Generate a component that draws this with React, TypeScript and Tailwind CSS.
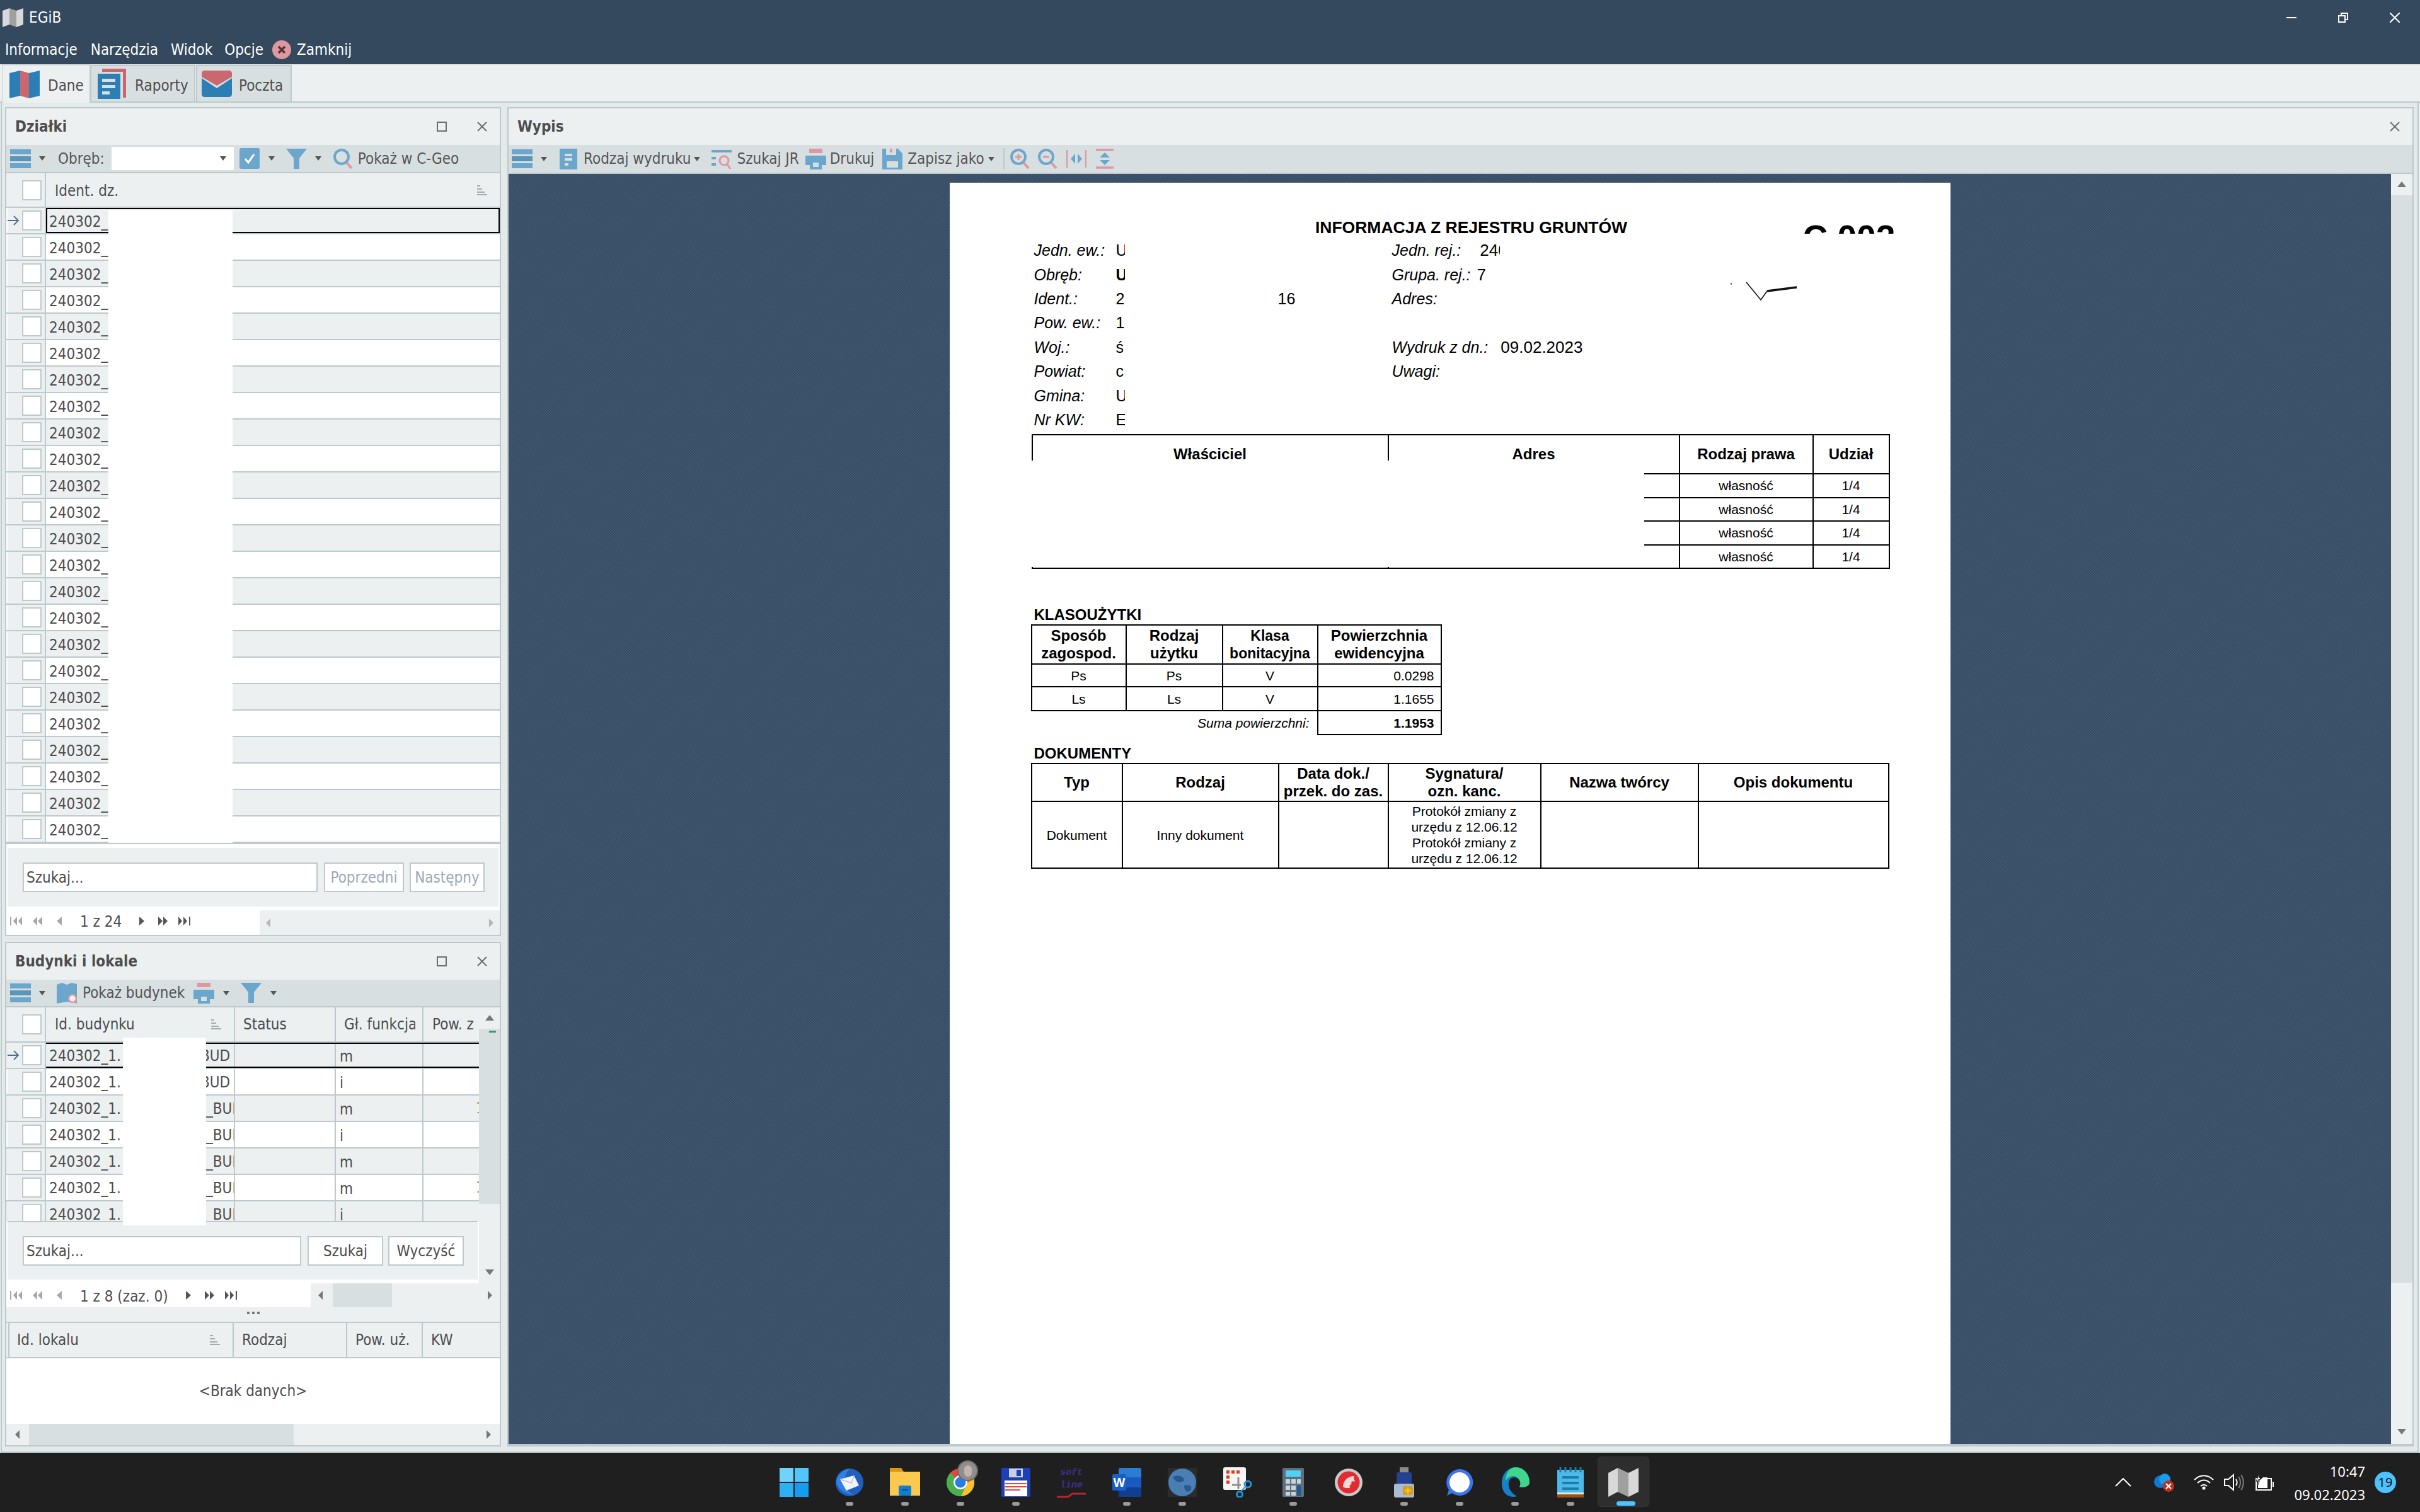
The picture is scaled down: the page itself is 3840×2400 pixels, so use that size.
import React from "react";

const BLUE = "#6ba6cd";
const RED = "#dd98a0";

function Caret({ className = "" }: { className?: string }) {
  return <span className={`inline-block w-0 h-0 border-x-[5px] border-x-transparent border-t-[7px] border-t-[#555555] ${className}`} />;
}

function Hamburger() {
  return (
    <svg width="33" height="30" viewBox="0 0 33 30">
      <rect width="33" height="8" fill={BLUE} />
      <rect y="11" width="33" height="8" fill="#5b96b8" />
      <rect y="22" width="33" height="8" fill={BLUE} />
    </svg>
  );
}

function Funnel() {
  return (
    <svg width="33" height="32" viewBox="0 0 33 32">
      <path d="M0 0H33L21 15V32H12V15Z" fill={BLUE} />
    </svg>
  );
}

function Magnifier({ plus, minus }: { plus?: boolean; minus?: boolean }) {
  return (
    <svg width="32" height="32" viewBox="0 0 32 32">
      <ellipse cx="14" cy="13" rx="11" ry="11" fill="none" stroke={BLUE} strokeWidth="4" />
      <path d="M22 22L30 31" stroke={RED} strokeWidth="4" />
      {plus && <path d="M14 8V18M9 13H19" stroke={RED} strokeWidth="3" />}
      {minus && <path d="M9 13H19" stroke={RED} strokeWidth="3" />}
    </svg>
  );
}

function Printer() {
  return (
    <svg width="33" height="33" viewBox="0 0 33 33">
      <rect x="6" width="21" height="7" fill={RED} />
      <path d="M0 11H33V26H26V18H7V26H0Z" fill={BLUE} />
      <path d="M7 18H26V33H7ZM12 22V29H21V22Z" fill={BLUE} fillRule="evenodd" />
    </svg>
  );
}

function SortMark() {
  return (
    <svg width="16" height="16" viewBox="0 0 16 16">
      <path d="M0 1H5M0 6H8M0 11H12M0 15H16" stroke="#8a9599" strokeWidth="1.6" />
    </svg>
  );
}

function CheckBox({ h = 32 }: { h?: number }) {
  return <span style={{ height: h }} className="block w-[31px] bg-white border-2 border-[#bdc9cc]" />;
}

function RowArrow() {
  return (
    <svg width="19" height="16" viewBox="0 0 19 16" className="absolute left-[2px]">
      <path d="M0 8H17M10 1L17 8L10 15" fill="none" stroke="#4f6b8a" strokeWidth="1.8" />
    </svg>
  );
}

function Tri({ dir, c = "#777777" }: { dir: "l" | "r" | "u" | "d"; c?: string }) {
  const p = { l: "M9 0V14L2 7Z", r: "M1 0V14L8 7Z", u: "M8 2L15 11H1Z", d: "M1 2H15L8 11Z" }[dir];
  return (
    <svg width={dir === "u" || dir === "d" ? 16 : 10} height="14" viewBox={dir === "u" || dir === "d" ? "0 0 16 14" : "0 0 10 14"}>
      <path d={p} fill={c} />
    </svg>
  );
}

function Pager({ text, gap }: { text: string; gap: number }) {
  const dim = "#a8a8a8";
  const dark = "#555555";
  return (
    <div className="flex items-center h-full">
      <svg width="20" height="14" viewBox="0 0 20 14" className="ml-[6px]">
        <path d="M0 0H2V14H0ZM11 0V14L5 7ZM19 0V14L13 7Z" fill={dim} />
      </svg>
      <svg width="15" height="14" viewBox="0 0 15 14" className="ml-[16px]">
        <path d="M7 0V14L0 7ZM15 0V14L8 7Z" fill={dim} />
      </svg>
      <svg width="8" height="14" viewBox="0 0 8 14" className="ml-[23px]">
        <path d="M8 0V14L0 7Z" fill={dim} />
      </svg>
      <span className="ml-[29px] pt-[3px] whitespace-nowrap text-[#4d4d4d]">{text}</span>
      <svg width="8" height="14" viewBox="0 0 8 14" style={{ marginLeft: gap }}>
        <path d="M0 0V14L8 7Z" fill={dark} />
      </svg>
      <svg width="15" height="14" viewBox="0 0 15 14" className="ml-[22px]">
        <path d="M0 0V14L7 7ZM8 0V14L15 7Z" fill={dark} />
      </svg>
      <svg width="20" height="14" viewBox="0 0 20 14" className="ml-[17px]">
        <path d="M0 0V14L6 7ZM8 0V14L14 7ZM17 0H19V14H17Z" fill={dark} />
      </svg>
    </div>
  );
}

function PanelHeader({ title }: { title: string }) {
  return (
    <div className="h-[58px] shrink-0 flex items-center justify-between pl-[14px] pr-[20px] bg-[#ecf0f1]">
      <span className="font-bold text-[#4d4d4d] text-[24px]">{title}</span>
      <div className="flex items-center gap-[48px]">
        <span className="block w-[16px] h-[16px] border-2 border-[#6e6e6e]" />
        <svg width="16" height="16" viewBox="0 0 16 16">
          <path d="M1 1L15 15M15 1L1 15" stroke="#6e6e6e" strokeWidth="2" />
        </svg>
      </div>
    </div>
  );
}

function Band({ className = "", children }: { className?: string; children: React.ReactNode }) {
  return <div className={`flex items-center bg-[#ecf0f1] ${className}`}>{children}</div>;
}

function SmallBtn({ w, disabled, children }: { w: number; disabled?: boolean; children: React.ReactNode }) {
  return (
    <span
      style={{ width: w }}
      className={`h-[47px] flex items-center justify-center bg-white border-2 border-[#bdc9cc] ${disabled ? "text-[#9aa8ba]" : "text-[#4d4d4d]"}`}
    >
      {children}
    </span>
  );
}

function DzialkiPanel() {
  const rows = Array.from({ length: 24 }, (_, i) => i);
  return (
    <section className="h-[1316px] shrink-0 flex flex-col border-2 border-[#bdc9cc] bg-white">
      <PanelHeader title="Działki" />
      <div className="h-[45px] shrink-0 flex items-center bg-[#d8dfe1] border-b-2 border-[#bdc9cc] text-[#555555]">
        <span className="ml-[6px]"><Hamburger /></span>
        <Caret className="ml-[13px]" />
        <span className="ml-[20px]">Obręb:</span>
        <span className="ml-[9px] w-[198px] h-[41px] bg-white border-2 border-[#d8dfe1] flex items-center justify-end pr-[12px]"><Caret /></span>
        <svg width="32" height="33" viewBox="0 0 32 33" className="ml-[7px]">
          <rect width="32" height="33" rx="3" fill={BLUE} />
          <path d="M9 17L14 23L23 10" fill="none" stroke="#fff" strokeWidth="3" />
        </svg>
        <Caret className="ml-[14px]" />
        <span className="ml-[18px]"><Funnel /></span>
        <Caret className="ml-[13px]" />
        <span className="ml-[18px]"><Magnifier /></span>
        <span className="ml-[8px] whitespace-nowrap">Pokaż w C-Geo</span>
      </div>
      <div className="relative h-[1063px] shrink-0 overflow-hidden bg-white">
        <div className="h-[55px] flex bg-[#ecf0f1] border-b-2 border-[#bdc9cc] text-[#4d4d4d]">
          <div className="ml-[2px] w-[61px] shrink-0 flex items-center pl-[23px] border-r-2 border-[#bdc9cc]"><CheckBox /></div>
          <div className="flex-1 flex items-center justify-between pl-[14px] pr-[20px]"><span className="pt-[3px]">Ident. dz.</span><SortMark /></div>
        </div>
        {rows.map((i) => (
          <div key={i} className="relative h-[42px] flex border-b-2 border-[#bdc9cc] text-[#4d4d4d]">
            <div className="ml-[2px] w-[61px] shrink-0 flex items-center pl-[23px] bg-[#ecf0f1] border-r-2 border-[#bdc9cc]">
              {i === 0 && <RowArrow />}
              <CheckBox />
            </div>
            <div className={`flex-1 flex items-center pl-[5px] ${i % 2 === 0 ? "bg-[#ecf0f1]" : "bg-white"} ${i === 0 ? "border-2 border-black" : ""}`}>
              <span className={`pt-[3px] ${i === 0 ? "-ml-[2px]" : ""}`}>240302_</span>
            </div>
          </div>
        ))}
        <div className="absolute left-[162px] top-[59px] w-[197px] h-[1008px] bg-white" />
      </div>
      <div className="h-[8px] shrink-0 bg-white border-t-2 border-[#bdc9cc]" />
      <Band className="h-[93px] shrink-0 mx-[2px] pl-[24px]">
        <span className="w-[468px] h-[47px] flex items-center pl-[4px] bg-white border-2 border-[#bdc9cc] text-[#4d4d4d]">Szukaj...</span>
        <span className="ml-[10px]"><SmallBtn w={127} disabled>Poprzedni</SmallBtn></span>
        <span className="ml-[9px]"><SmallBtn w={119} disabled>Następny</SmallBtn></span>
      </Band>
      <div className="flex-1 flex items-stretch">
        <div className="w-[402px] shrink-0"><Pager text="1 z 24" gap={28} /></div>
        <div className="flex-1 mt-[6px] bg-[#ecf0f1] flex items-center justify-between px-[8px]">
          <Tri dir="l" c="#b5b5b5" /><Tri dir="r" c="#b5b5b5" />
        </div>
      </div>
    </section>
  );
}

function BudCell({ w, children, last }: { w: number; children?: React.ReactNode; last?: boolean }) {
  return (
    <div style={{ width: w }} className={`shrink-0 h-full flex items-center overflow-hidden ${last ? "" : "border-r-2 border-[#bdc9cc]"}`}>
      {children}
    </div>
  );
}

function BudynkiPanel() {
  const data = [
    { f: "m", s: "BUD", n: false, head: "w-[240px]" },
    { f: "i", s: "BUD", n: false, head: "w-[240px]" },
    { f: "m", s: "_BUD", n: true, head: "w-[249px]" },
    { f: "i", s: "_BUD", n: false, head: "w-[249px]" },
    { f: "m", s: "_BUD", n: false, head: "w-[249px]" },
    { f: "m", s: "_BUD", n: true, head: "w-[249px]" },
    { f: "i", s: "_BUD", n: false, head: "w-[249px]" },
  ];
  return (
    <section className="flex-1 flex flex-col border-2 border-[#bdc9cc] bg-white">
      <PanelHeader title="Budynki i lokale" />
      <div className="h-[44px] shrink-0 flex items-center bg-[#d8dfe1] border-b-2 border-[#bdc9cc] text-[#555555]">
        <span className="ml-[6px]"><Hamburger /></span>
        <Caret className="ml-[13px]" />
        <svg width="33" height="33" viewBox="0 0 33 33" className="ml-[18px]">
          <path d="M0 3L8 0L16 3L24 0L32 2V32L16 30L0 33Z" fill={BLUE} />
          <circle cx="25" cy="25" r="6" fill="#eef2f3" stroke={RED} strokeWidth="2.5" />
          <path d="M29 29L32 33" stroke={RED} strokeWidth="2.5" />
        </svg>
        <span className="ml-[8px] whitespace-nowrap">Pokaż budynek</span>
        <span className="ml-[14px]"><Printer /></span>
        <Caret className="ml-[14px]" />
        <span className="ml-[18px]"><Funnel /></span>
        <Caret className="ml-[14px]" />
      </div>
      <div className="h-[438px] shrink-0 flex">
        <div className="w-[750px] shrink-0 relative flex flex-col bg-white">
          <div className="h-[339px] shrink-0 overflow-hidden">
            <div className="h-[56px] flex bg-[#ecf0f1] border-b-2 border-[#bdc9cc] text-[#4d4d4d]">
              <div className="ml-[2px] w-[61px] shrink-0 flex items-center pl-[23px] border-r-2 border-[#bdc9cc]"><CheckBox /></div>
              <BudCell w={300}><span className="pl-[14px] flex-1">Id. budynku</span><span className="pr-[20px]"><SortMark /></span></BudCell>
              <BudCell w={160}><span className="pl-[13px]">Status</span></BudCell>
              <BudCell w={139}><span className="pl-[13px] w-[126px] leading-[32px] overflow-hidden whitespace-nowrap">Gł. funkcja</span></BudCell>
              <BudCell w={88} last><span className="pl-[14px] leading-[32px] whitespace-nowrap">Pow. z</span></BudCell>
            </div>
            {data.map((r, i) => (
              <div key={i} className={`relative h-[42px] flex border-b-2 border-[#bdc9cc] text-[#4d4d4d] ${i % 2 === 0 ? "bg-[#ecf0f1]" : "bg-white"}`}>
                <div className="ml-[2px] w-[61px] shrink-0 flex items-center pl-[23px] bg-[#ecf0f1] border-r-2 border-[#bdc9cc]">
                  {i === 0 && <RowArrow />}
                  <CheckBox />
                </div>
                <BudCell w={300}>
                  <span className="ml-[5px] w-[294px] flex leading-[32px] pt-[2px] whitespace-nowrap overflow-hidden">
                    <span className={`${r.head} shrink-0`}>240302_1.</span>
                    <span>{r.s}</span>
                  </span>
                </BudCell>
                <BudCell w={160} />
                <BudCell w={139}><span className="pl-[6px] pt-[3px]">{r.f}</span></BudCell>
                <BudCell w={88} last>{r.n && <span className="ml-[83px] leading-[32px] text-[#b98a4d]">1</span>}</BudCell>
                {i === 0 && <div className="absolute left-[63px] right-0 top-0 bottom-0 border-y-2 border-black pointer-events-none" />}
              </div>
            ))}
          </div>
          <Band className="h-[93px] shrink-0 ml-[2px] mr-[2px] pl-[24px] border-t-2 border-[#bdc9cc]">
            <span className="w-[442px] h-[47px] flex items-center pl-[4px] bg-white border-2 border-[#bdc9cc] text-[#4d4d4d]">Szukaj...</span>
            <span className="ml-[10px]"><SmallBtn w={120}>Szukaj</SmallBtn></span>
            <span className="ml-[8px]"><SmallBtn w={120}>Wyczyść</SmallBtn></span>
          </Band>
          <div className="absolute left-[185px] top-[48px] w-[132px] h-[298px] bg-white" />
        </div>
        <div className="flex-1 flex flex-col">
          <div className="relative h-[34px] shrink-0 bg-[#ecf0f1] flex items-center justify-center">
            <Tri dir="u" />
            <span className="absolute left-[16px] bottom-[-6px] w-[11px] h-[3px] bg-[#3b9a62]" />
          </div>
          <div className="h-[278px] shrink-0 bg-[#d8dfe1]" />
          <div className="flex-1 bg-[#ecf0f1] flex items-end justify-center pb-[10px]"><Tri dir="d" /></div>
        </div>
      </div>
      <div className="h-[38px] shrink-0 flex">
        <div className="w-[483px] shrink-0"><Pager text="1 z 8 (zaz. 0)" gap={28} /></div>
        <div className="flex-1 bg-[#ecf0f1] flex items-center justify-between px-[10px] relative">
          <Tri dir="l" />
          <span className="absolute left-[35px] top-0 bottom-0 w-[94px] bg-[#d8dfe1]" />
          <Tri dir="r" />
        </div>
      </div>
      <div className="h-[23px] shrink-0 bg-[#ecf0f1] flex items-start justify-center pt-[7px] gap-[4px]">
        <span className="w-[4px] h-[4px] bg-[#777777]" />
        <span className="w-[4px] h-[4px] bg-[#777777]" />
        <span className="w-[4px] h-[4px] bg-[#777777]" />
      </div>
      <div className="h-[58px] shrink-0 flex bg-[#ecf0f1] border-y-2 border-[#bdc9cc] pl-[3px] text-[#4d4d4d]">
        <div className="w-[358px] shrink-0 flex items-center justify-between pl-[12px] pr-[20px] border-x-2 border-[#bdc9cc]"><span>Id. lokalu</span><SortMark /></div>
        <div className="w-[180px] shrink-0 flex items-center pl-[13px] border-r-2 border-[#bdc9cc]">Rodzaj</div>
        <div className="w-[120px] shrink-0 flex items-center pl-[13px] border-r-2 border-[#bdc9cc] whitespace-nowrap">Pow. uż.</div>
        <div className="flex-1 flex items-center pl-[13px]">KW</div>
      </div>
      <div className="h-[104px] shrink-0 bg-white flex items-center justify-center text-[#4d4d4d]">&lt;Brak danych&gt;</div>
      <div className="flex-1 bg-[#ecf0f1] flex items-center justify-between px-[12px] relative">
        <Tri dir="l" />
        <span className="absolute left-[36px] top-0 bottom-0 w-[420px] bg-[#d8dfe1]" />
        <Tri dir="r" />
      </div>
    </section>
  );
}

function InfoRow({ label, value, bold, extra, label2, value2, v2Class = "" }: { label: string; value?: string; bold?: boolean; extra?: string; label2?: string; value2?: string; v2Class?: string }) {
  return (
    <div className="h-[38.4px] flex items-center text-[25px] leading-[32px] text-black">
      <span className="w-[130px] shrink-0 italic whitespace-nowrap">{label}</span>
      <span className="w-[257px] shrink-0"><span className={`block w-[14px] overflow-hidden ${bold ? "font-bold" : ""}`}>{value}</span></span>
      <span className="w-[181px] shrink-0">{extra}</span>
      {label2 && <span className="italic whitespace-nowrap">{label2}</span>}
      {value2 && <span className={v2Class}>{value2}</span>}
    </div>
  );
}

const cell = "border-2 border-black text-center align-middle p-0";

function Paper() {
  return (
    <div className="relative w-[1588px] h-[2100px] shrink-0 bg-white pl-[134px] pt-[58px] [font-family:'Liberation_Sans',Arial,sans-serif] text-black">
      <div className="relative h-[30px]">
        <div className="w-[1388px] text-center font-bold text-[26.5px]">INFORMACJA Z REJESTRU GRUNTÓW</div>
        <div className="absolute left-[1220px] top-[7px] h-[16px] overflow-hidden text-[55px] font-bold leading-[44px] whitespace-nowrap">C 002</div>
      </div>
      <InfoRow label="Jedn. ew.:" value="U" label2="Jedn. rej.:" value2="240" v2Class="ml-[30px] w-[32px] overflow-hidden text-[26px]" />
      <InfoRow label="Obręb:" value="U" bold label2="Grupa. rej.:" value2="7" v2Class="ml-[10px] text-[26px]" />
      <InfoRow label="Ident.:" value="2" extra="16" label2="Adres:" />
      <InfoRow label="Pow. ew.:" value="1" />
      <InfoRow label="Woj.:" value="ś" label2="Wydruk z dn.:" value2="09.02.2023" v2Class="ml-[20px] text-[26px]" />
      <InfoRow label="Powiat:" value="c" label2="Uwagi:" />
      <InfoRow label="Gmina:" value="U" />
      <InfoRow label="Nr KW:" value="E" />

      <svg width="110" height="32" viewBox="0 0 110 32" className="absolute left-[1237px] top-[158px]">
        <path d="M2 2L4 3M27 0L50 28L60 14" fill="none" stroke="#111" strokeWidth="1.6" />
        <path d="M60 14L107 8" stroke="#111" strokeWidth="3.5" />
      </svg>

      <div className="relative mt-[4px] -ml-[4px] w-[1360px]">
        <table className="w-full table-fixed border-collapse text-[24px]">
          <colgroup><col className="w-[565px]" /><col className="w-[462px]" /><col className="w-[212px]" /><col className="w-[121px]" /></colgroup>
          <tbody>
            <tr className="h-[62px] font-bold">
              <td className={cell}>Właściciel</td><td className={cell}>Adres</td><td className={cell}>Rodzaj prawa</td><td className={cell}>Udział</td>
            </tr>
            {[0, 1, 2, 3].map((i) => (
              <tr key={i} className="h-[37.5px] text-[21px]">
                <td className={cell} /><td className={cell} /><td className={cell}>własność</td><td className={cell}>1/4</td>
              </tr>
            ))}
          </tbody>
        </table>
        <div className="absolute -left-[2px] top-[42px] w-[974px] h-[169px] bg-white" />
      </div>

      <div className="mt-[58px] h-[30px] flex items-center font-bold text-[24px]">KLASOUŻYTKI</div>
      <table className="-ml-[5px] w-[650px] table-fixed border-collapse text-[24px]">
        <colgroup><col className="w-[150px]" /><col className="w-[153px]" /><col className="w-[151px]" /><col className="w-[196px]" /></colgroup>
        <tbody>
          <tr className="h-[62px] font-bold leading-[28px]">
            <td className={cell}>Sposób<br />zagospod.</td><td className={cell}>Rodzaj<br />użytku</td><td className={`${cell} !text-[23px]`}>Klasa<br />bonitacyjna</td><td className={cell}>Powierzchnia<br />ewidencyjna</td>
          </tr>
          {[["Ps", "0.0298", "h-[36px]"], ["Ls", "1.1655", "h-[38px]"]].map(([k, v, h]) => (
            <tr key={k} className={`${h} text-[21px]`}>
              <td className={cell}>{k}</td><td className={cell}>{k}</td><td className={cell}>V</td><td className={`${cell} !text-right !pr-[10px]`}>{v}</td>
            </tr>
          ))}
          <tr className="h-[38px] text-[21px]">
            <td colSpan={3} className="text-right pr-[12px] italic align-middle">Suma powierzchni:</td>
            <td className={`${cell} !text-right !pr-[10px] font-bold`}>1.1953</td>
          </tr>
        </tbody>
      </table>

      <div className="mt-[14px] h-[30px] flex items-center font-bold text-[24px]">DOKUMENTY</div>
      <table className="-ml-[5px] w-[1360px] table-fixed border-collapse text-[24px]">
        <colgroup><col className="w-[144px]" /><col className="w-[248px]" /><col className="w-[174px]" /><col className="w-[242px]" /><col className="w-[250px]" /><col className="w-[302px]" /></colgroup>
        <tbody>
          <tr className="h-[60px] font-bold leading-[28px]">
            <td className={cell}>Typ</td><td className={cell}>Rodzaj</td><td className={cell}>Data dok./<br />przek. do zas.</td><td className={cell}>Sygnatura/<br />ozn. kanc.</td><td className={cell}>Nazwa twórcy</td><td className={cell}>Opis dokumentu</td>
          </tr>
          <tr className="h-[106px] text-[21px]">
            <td className={cell}>Dokument</td><td className={cell}>Inny dokument</td><td className={cell} />
            <td className={`${cell} leading-[25px]`}>Protokół zmiany z<br />urzędu z 12.06.12<br />Protokół zmiany z<br />urzędu z 12.06.12</td>
            <td className={cell} /><td className={cell} />
          </tr>
        </tbody>
      </table>
    </div>
  );
}

function WypisPanel() {
  return (
    <section className="flex-1 flex flex-col border-2 border-b-4 border-[#bdc9cc] bg-[#ecf0f1]">
      <div className="h-[58px] shrink-0 flex items-center justify-between pl-[14px] pr-[20px]">
        <span className="font-bold text-[#4d4d4d] text-[24px]">Wypis</span>
        <svg width="16" height="16" viewBox="0 0 16 16">
          <path d="M1 1L15 15M15 1L1 15" stroke="#6e6e6e" strokeWidth="2" />
        </svg>
      </div>
      <div className="h-[46px] shrink-0 flex items-center bg-[#d8dfe1] border-b-2 border-[#bdc9cc] text-[#555555]">
        <span className="ml-[5px]"><Hamburger /></span>
        <Caret className="ml-[13px]" />
        <svg width="28" height="33" viewBox="0 0 28 33" className="ml-[20px]">
          <path d="M0 0H28V33H0ZM8 8V12H20V8ZM8 15V19H20V15ZM8 23V27H14V23Z" fill={BLUE} fillRule="evenodd" />
        </svg>
        <span className="ml-[10px] whitespace-nowrap">Rodzaj wydruku</span>
        <Caret className="ml-[5px]" />
        <svg width="32" height="33" viewBox="0 0 32 33" className="ml-[18px]">
          <path d="M0 2H32V6H0ZM0 13H7V17H0ZM0 23H7V27H0Z" fill={BLUE} />
          <circle cx="20" cy="19" r="7" fill="none" stroke={RED} strokeWidth="3" />
          <path d="M25 25L30 32" stroke={RED} strokeWidth="3" />
        </svg>
        <span className="ml-[8px] whitespace-nowrap">Szukaj JR</span>
        <span className="ml-[10px]"><Printer /></span>
        <span className="ml-[6px]">Drukuj</span>
        <svg width="32" height="33" viewBox="0 0 32 33" className="ml-[13px]">
          <path d="M0 0H6V10H22V0H25L32 8V33H0ZM7 20V30H25V20Z" fill={BLUE} fillRule="evenodd" />
          <rect x="12" y="0" width="4" height="6" fill={RED} />
        </svg>
        <span className="ml-[8px] whitespace-nowrap">Zapisz jako</span>
        <Caret className="ml-[6px]" />
        <span className="ml-[14px] w-[2px] h-[34px] bg-[#bdc9cc]" />
        <span className="ml-[8px]"><Magnifier plus /></span>
        <span className="ml-[12px]"><Magnifier minus /></span>
        <svg width="32" height="32" viewBox="0 0 32 32" className="ml-[14px]">
          <path d="M1 2V30M31 2V30" stroke={RED} strokeWidth="2.5" />
          <path d="M14 8V24L7 16ZM18 8V24L25 16Z" fill={BLUE} />
        </svg>
        <svg width="30" height="32" viewBox="0 0 30 32" className="ml-[14px]">
          <path d="M1 2H29M1 30H29" stroke={RED} strokeWidth="3.5" />
          <path d="M7 14H23L15 6ZM7 18H23L15 26Z" fill={BLUE} />
        </svg>
      </div>
      <div className="flex-1 min-h-0 flex overflow-hidden">
        <div className="flex-1 flex justify-center pt-[14px] overflow-hidden bg-[repeating-linear-gradient(135deg,#34495e_0px,#34495e_1.414px,#435a75_1.414px,#435a75_2.828px)]">
          <Paper />
        </div>
        <div className="w-[34px] shrink-0 flex flex-col">
          <div className="h-[34px] shrink-0 bg-[#ecf0f1] flex items-center justify-center"><Tri dir="u" /></div>
          <div className="h-[1726px] shrink-0 bg-[#d8dfe1]" />
          <div className="flex-1 bg-[#ecf0f1] flex items-end justify-center pb-[12px]"><Tri dir="d" /></div>
        </div>
      </div>
    </section>
  );
}

function TaskIcon({ dot, active, children }: { dot?: boolean; active?: boolean; children: React.ReactNode }) {
  return (
    <div className="relative w-[88px] h-[94px] flex items-center justify-center">
      {active && <span className="absolute left-[-1px] right-[7px] top-[6px] bottom-[8px] rounded-[6px] bg-[#2e2e2e] border border-[#383838]" />}
      <span className="relative">{children}</span>
      {dot && <span className="absolute left-[38px] top-[78px] w-[12px] h-[6px] rounded-full bg-[#9a9a9a]" />}
      {active && <span className="absolute left-[29px] top-[77px] w-[30px] h-[7px] rounded-full bg-[#4cc2ff]" />}
    </div>
  );
}

function Taskbar() {
  return (
    <footer className="h-[94px] shrink-0 grid grid-cols-[1fr_auto_1fr] bg-[#1f1f1f] [font-family:'Noto_Sans',sans-serif]">
      <div />
      <div className="flex items-center">
        <TaskIcon>
          <svg width="46" height="46" viewBox="0 0 46 46">
            <rect width="22" height="22" fill="#6fd3fb" /><rect x="24" width="22" height="22" fill="#52c5fa" />
            <rect y="24" width="22" height="22" fill="#2cb1f4" /><rect x="24" y="24" width="22" height="22" fill="#159bef" />
          </svg>
        </TaskIcon>
        <TaskIcon dot>
          <svg width="46" height="46" viewBox="0 0 46 46">
            <circle cx="23" cy="23" r="22" fill="#1f5fbf" />
            <path d="M23 1C10 4 2 14 2 24C6 34 16 42 30 43C12 34 10 18 23 1Z" fill="#2f80e6" />
            <path d="M8 18L30 12L38 28L18 36Z" fill="#f2f4f8" />
            <path d="M8 18L26 24L30 12" fill="none" stroke="#b7c2d4" strokeWidth="1.5" />
          </svg>
        </TaskIcon>
        <TaskIcon dot>
          <svg width="48" height="46" viewBox="0 0 48 46">
            <path d="M0 0H18L22 6H0Z" fill="#d99a11" /><path d="M0 6H48V44H0Z" fill="#fcc94f" />
            <rect x="14" y="28" width="20" height="16" rx="3" fill="#0f7fd3" />
            <rect x="19" y="34" width="10" height="2" fill="#0b4e85" />
          </svg>
        </TaskIcon>
        <TaskIcon dot>
          <span className="relative block w-[46px] h-[46px]">
            <svg width="46" height="46" viewBox="0 0 46 46">
              <circle cx="23" cy="23" r="22" fill="#4caf50" />
              <path d="M23 1A22 22 0 0 1 44 23H23L7 8A22 22 0 0 1 23 1Z" fill="#e9453a" />
              <path d="M44 16A22 22 0 0 1 24 45L34 24Z" fill="#fbc02d" />
              <path d="M2 18L12 34L24 45C10 45 1 34 1 23Z" fill="#4caf50" />
              <circle cx="23" cy="23" r="11" fill="#fff" /><circle cx="23" cy="23" r="8.5" fill="#2a7de1" />
            </svg>
            <span className="absolute left-[18px] top-[-12px] w-[33px] h-[33px] rounded-full bg-[#8e8e8e] border-2 border-[#6a6a6a] flex items-center justify-center">
              <span className="w-[12px] h-[18px] rounded-full bg-[#c4b3a8]" />
            </span>
          </span>
        </TaskIcon>
        <TaskIcon dot>
          <svg width="46" height="46" viewBox="0 0 46 46">
            <rect width="46" height="46" rx="2" fill="#1d3fb8" />
            <rect x="12" y="1" width="22" height="14" fill="#c8d0e6" /><rect x="24" y="3" width="7" height="10" fill="#1d3fb8" />
            <rect x="5" y="20" width="36" height="25" fill="#fff" />
            <path d="M6 25H40M6 30H40M6 35H30" stroke="#d74a4a" strokeWidth="2" />
          </svg>
        </TaskIcon>
        <TaskIcon>
          <span className="flex flex-col items-center text-[#3e2f8f] italic font-bold leading-[20px] text-[15px] [font-family:'Liberation_Mono',monospace]">
            <span>soft</span>
            <span>line</span>
            <svg width="46" height="10" viewBox="0 0 46 10">
              <path d="M0 8H16C22 8 20 3 26 3H46" fill="none" stroke="#b82433" strokeWidth="3" />
            </svg>
          </span>
        </TaskIcon>
        <TaskIcon dot>
          <svg width="46" height="46" viewBox="0 0 46 46">
            <rect x="10" width="36" height="46" rx="3" fill="#2b7cd3" />
            <rect x="10" y="15" width="36" height="16" fill="#185abd" /><rect x="10" y="31" width="36" height="15" fill="#103f91" />
            <rect y="10" width="22" height="26" rx="2" fill="#1a5ec7" />
            <text x="11" y="30" textAnchor="middle" fontSize="20" fontWeight="700" fill="#fff" fontFamily="Liberation Sans">W</text>
          </svg>
        </TaskIcon>
        <TaskIcon dot>
          <svg width="46" height="46" viewBox="0 0 46 46">
            <rect width="46" height="46" fill="#2c2c2c" />
            <circle cx="23" cy="23" r="22" fill="#4a7fb5" />
            <path d="M8 14C18 10 26 14 26 20C20 24 12 24 8 14ZM26 28C34 26 40 28 36 36C30 40 26 36 26 28Z" fill="#27588f" />
          </svg>
        </TaskIcon>
        <TaskIcon>
          <svg width="46" height="48" viewBox="0 0 46 48">
            <rect width="36" height="36" rx="3" fill="#f5f5f5" />
            <path d="M5 5H10V10H5ZM13 5H18V10H13ZM21 5H26V10H21ZM5 13H10V18H5ZM5 21H10V26H5Z" fill="#d63f1f" />
            <path d="M24 16V34M14 28H28" stroke="#8f8f8f" strokeWidth="3" />
            <circle cx="39" cy="27" r="5" fill="none" stroke="#2196d9" strokeWidth="3" />
            <circle cx="26" cy="43" r="4.5" fill="none" stroke="#2196d9" strokeWidth="3" />
            <path d="M36 30L27 40" stroke="#2196d9" strokeWidth="2" />
          </svg>
        </TaskIcon>
        <TaskIcon dot>
          <svg width="34" height="46" viewBox="0 0 34 46">
            <rect width="34" height="46" rx="2" fill="#5f6f7c" />
            <rect x="5" y="4" width="24" height="10" rx="1" fill="#4fd2f5" />
            <path d="M5 18H12V25H5ZM14 18H21V25H14ZM23 18H29V25H23ZM5 28H12V35H5ZM14 28H21V35H14ZM5 38H12V44H5ZM14 38H21V44H14Z" fill="#c9d3da" />
            <rect x="23" y="28" width="6" height="16" fill="#1e5a94" />
          </svg>
        </TaskIcon>
        <TaskIcon>
          <svg width="46" height="46" viewBox="0 0 46 46">
            <circle cx="23" cy="23" r="22" fill="#c9c9c9" /><circle cx="23" cy="23" r="17.5" fill="#e02b32" />
            <path d="M14 30C14 20 22 13 32 13C30 16 32 18 33 22C28 20 26 22 28 26C25 26 24 28 25 32H18Z" fill="#f7d6d6" />
          </svg>
        </TaskIcon>
        <TaskIcon dot>
          <svg width="32" height="48" viewBox="0 0 32 48">
            <rect x="9" width="14" height="8" fill="#8a8a8a" />
            <rect x="4" y="8" width="24" height="18" rx="3" fill="#24428f" />
            <rect x="0" y="26" width="32" height="22" rx="3" fill="#a9bbd0" />
            <rect x="14" y="30" width="16" height="14" rx="3" fill="#d89a28" />
            <path d="M22 32V42M17 37H27" stroke="#f7c600" strokeWidth="3" />
          </svg>
        </TaskIcon>
        <TaskIcon dot>
          <svg width="44" height="46" viewBox="0 0 44 46">
            <path d="M22 2A21 21 0 1 1 10 40L2 44L5 35A21 21 0 0 1 22 2Z" fill="#3a76f0" />
            <circle cx="22" cy="23" r="16" fill="#fff" />
          </svg>
        </TaskIcon>
        <TaskIcon dot>
          <svg width="46" height="48" viewBox="0 0 46 48">
            <path d="M2 26C2 8 14 0 24 0C38 0 46 12 46 24C46 30 38 33 30 31C34 26 30 16 22 16C10 16 8 36 26 46C12 50 2 40 2 26Z" fill="#1482c9" />
            <path d="M24 0C38 0 46 12 46 24C46 30 38 33 30 31C34 26 30 14 20 14C14 14 10 18 8 22C8 10 14 0 24 0Z" fill="#3dd68c" />
          </svg>
        </TaskIcon>
        <TaskIcon dot>
          <svg width="42" height="48" viewBox="0 0 42 48">
            <rect y="4" width="42" height="36" fill="#4db9e8" />
            <path d="M5 0V8M13 0V8M21 0V8M29 0V8M37 0V8" stroke="#1a7fa8" strokeWidth="3" />
            <rect x="8" y="14" width="26" height="4" fill="#1a7fa8" /><rect x="8" y="23" width="26" height="4" fill="#1a7fa8" /><rect x="8" y="32" width="26" height="4" fill="#1a7fa8" />
            <rect y="40" width="42" height="3" fill="#e4e7e8" /><rect y="43" width="42" height="5" fill="#9a5311" />
          </svg>
        </TaskIcon>
        <TaskIcon active>
          <svg width="48" height="46" viewBox="0 0 48 46" className="-ml-[9px]">
            <path d="M0 8L15 0V38L0 46Z" fill="#d8d8d8" /><path d="M15 0L32 8V46L15 38Z" fill="#a0a0a0" /><path d="M32 8L48 0V38L32 46Z" fill="#d8d8d8" />
          </svg>
        </TaskIcon>
      </div>
      <div className="flex items-center justify-end pr-[38px] text-white text-[22px]">
        <svg width="26" height="14" viewBox="0 0 26 14"><path d="M1 13L13 1L25 13" fill="none" stroke="#fff" strokeWidth="2" /></svg>
        <svg width="34" height="30" viewBox="0 0 34 30" className="ml-[35px]">
          <circle cx="11" cy="14" r="10" fill="#0f78d4" /><circle cx="18" cy="10" r="9" fill="#1a9be8" />
          <circle cx="24" cy="21" r="9" fill="#c42b1c" />
          <path d="M20 17L28 25M28 17L20 25" stroke="#fff" strokeWidth="2.4" />
        </svg>
        <svg width="32" height="24" viewBox="0 0 32 24" className="ml-[30px]">
          <path d="M1 8C10 -1 22 -1 31 8M6 13C12 7 20 7 26 13M11 18C14 15 18 15 21 18" fill="none" stroke="#fff" strokeWidth="2.2" />
          <circle cx="16" cy="21" r="2.6" fill="#fff" />
        </svg>
        <svg width="32" height="30" viewBox="0 0 32 30" className="ml-[16px]">
          <path d="M1 10H7L15 3V27L7 20H1Z" fill="none" stroke="#fff" strokeWidth="2" />
          <path d="M19 10C21 13 21 17 19 20" fill="none" stroke="#fff" strokeWidth="2" />
          <path d="M23 6C27 11 27 19 23 24M27 3C32 10 32 20 27 27" fill="none" stroke="#7c7c7c" strokeWidth="2" />
        </svg>
        <svg width="32" height="28" viewBox="0 0 32 28" className="ml-[16px]">
          <path d="M9 8H3V26H27V8H14" fill="none" stroke="#fff" strokeWidth="2" />
          <path d="M29 13H31V21H29Z" fill="#fff" />
          <path d="M6 23V13L14 6H21V23Z" fill="#fff" />
          <path d="M8 0L3 12H8L5 20" fill="#fff" stroke="#1f1f1f" strokeWidth="1" />
        </svg>
        <div className="ml-[32px] flex flex-col items-end leading-none gap-[15px]">
          <span>10:47</span>
          <span>09.02.2023</span>
        </div>
        <span className="ml-[15px] w-[34px] h-[34px] rounded-full bg-[#4cc2ff] text-[#111111] flex items-center justify-center text-[20px]">19</span>
      </div>
    </footer>
  );
}

export default function App() {
  return (
    <div className="w-[3840px] h-[2400px] flex flex-col overflow-hidden bg-[#ecf0f1] text-[24px] leading-none [font-family:'DejaVu_Sans_Condensed','Liberation_Sans',sans-serif]">
      <header className="h-[102px] shrink-0 flex flex-col bg-[#34495e] text-white">
        <div className="h-[56px] flex items-center">
          <svg width="33" height="30" viewBox="0 0 33 30" className="ml-[4px]">
            <path d="M0 4L11 0V26L0 30Z" fill="#d8d8d8" /><path d="M11 0L22 4V30L11 26Z" fill="#a0a0a0" /><path d="M22 4L33 0V26L22 30Z" fill="#d8d8d8" />
          </svg>
          <span className="ml-[9px]">EGiB</span>
          <div className="ml-auto flex items-center">
            <span className="w-[16px] h-[2px] bg-white mr-[66px]" />
            <svg width="16" height="16" viewBox="0 0 16 16" className="mr-[66px]">
              <path d="M1 5H11V15H1ZM5 5V1H15V11H11" fill="none" stroke="#fff" strokeWidth="2" />
            </svg>
            <svg width="16" height="16" viewBox="0 0 16 16" className="mr-[32px]">
              <path d="M0 0L16 16M16 0L0 16" stroke="#fff" strokeWidth="2" />
            </svg>
          </div>
        </div>
        <nav className="flex-1 flex items-center pl-[8px]">
          <span>Informacje</span>
          <span className="ml-[21px]">Narzędzia</span>
          <span className="ml-[20px]">Widok</span>
          <span className="ml-[19px]">Opcje</span>
          <svg width="30" height="30" viewBox="0 0 30 30" className="ml-[14px]">
            <circle cx="15" cy="15" r="15" fill="#dd98a0" />
            <path d="M10 10L20 20M20 10L10 20" stroke="#553338" strokeWidth="3.5" />
          </svg>
          <span className="ml-[9px]">Zamknij</span>
        </nav>
      </header>
      <div className="h-[61px] shrink-0 flex items-end pl-[3px] border-b-2 border-[#bdc9cc] text-[#4d4d4d]">
        <div className="relative -mb-[2px] w-[140px] h-[61px] flex items-center bg-[#ecf0f1] border-x-2 border-t-2 border-[#d8dfe1] pl-[10px]">
          <svg width="48" height="44" viewBox="0 0 48 44">
            <path d="M0 4L17 0V40L0 44Z" fill="#2c7fb5" /><path d="M17 0L31 4V44L17 40Z" fill="#c9686f" /><path d="M31 4L48 0V40L31 44Z" fill="#2c7fb5" />
          </svg>
          <span className="ml-[13px] pt-[5px]">Dane</span>
        </div>
        <div className="w-[167px] h-[58px] flex items-center bg-[#d8dfe1] border-x-2 border-t-2 border-[#bdc9cc] pl-[10px]">
          <svg width="45" height="48" viewBox="0 0 45 48">
            <path d="M7 0H45V46H40V5H7Z" fill="#c9686f" />
            <path d="M0 8H36V48H0ZM7 16V21H28V16ZM7 26V31H28V26ZM7 36V41H19V36Z" fill="#2c7fb5" fillRule="evenodd" />
          </svg>
          <span className="ml-[14px] pt-[5px]">Raporty</span>
        </div>
        <div className="ml-[1px] w-[152px] h-[58px] flex items-center bg-[#d8dfe1] border-x-2 border-t-2 border-[#bdc9cc] pl-[7px]">
          <svg width="48" height="42" viewBox="0 0 48 42">
            <path d="M0 12L24 28L48 12V37C48 40 46 42 43 42H5C2 42 0 40 0 37Z" fill="#2c7fb5" />
            <path d="M4 0H44C46 0 48 2 48 4V10L24 24L0 10V4C0 2 2 0 4 0Z" fill="#c9686f" />
          </svg>
          <span className="ml-[11px] pt-[5px]">Poczta</span>
        </div>
      </div>
      <main className="flex-1 min-h-0 flex gap-[10px] pl-[5px] pr-[6px] pt-[7px] pb-[8px] ml-[1px] mr-[2px] bg-[#e4e9ea] border-x-2 border-b-2 border-[#bdc9cc]">
        <div className="w-[787px] shrink-0 flex flex-col gap-[9px]">
          <DzialkiPanel />
          <BudynkiPanel />
        </div>
        <WypisPanel />
      </main>
      <Taskbar />
    </div>
  );
}
